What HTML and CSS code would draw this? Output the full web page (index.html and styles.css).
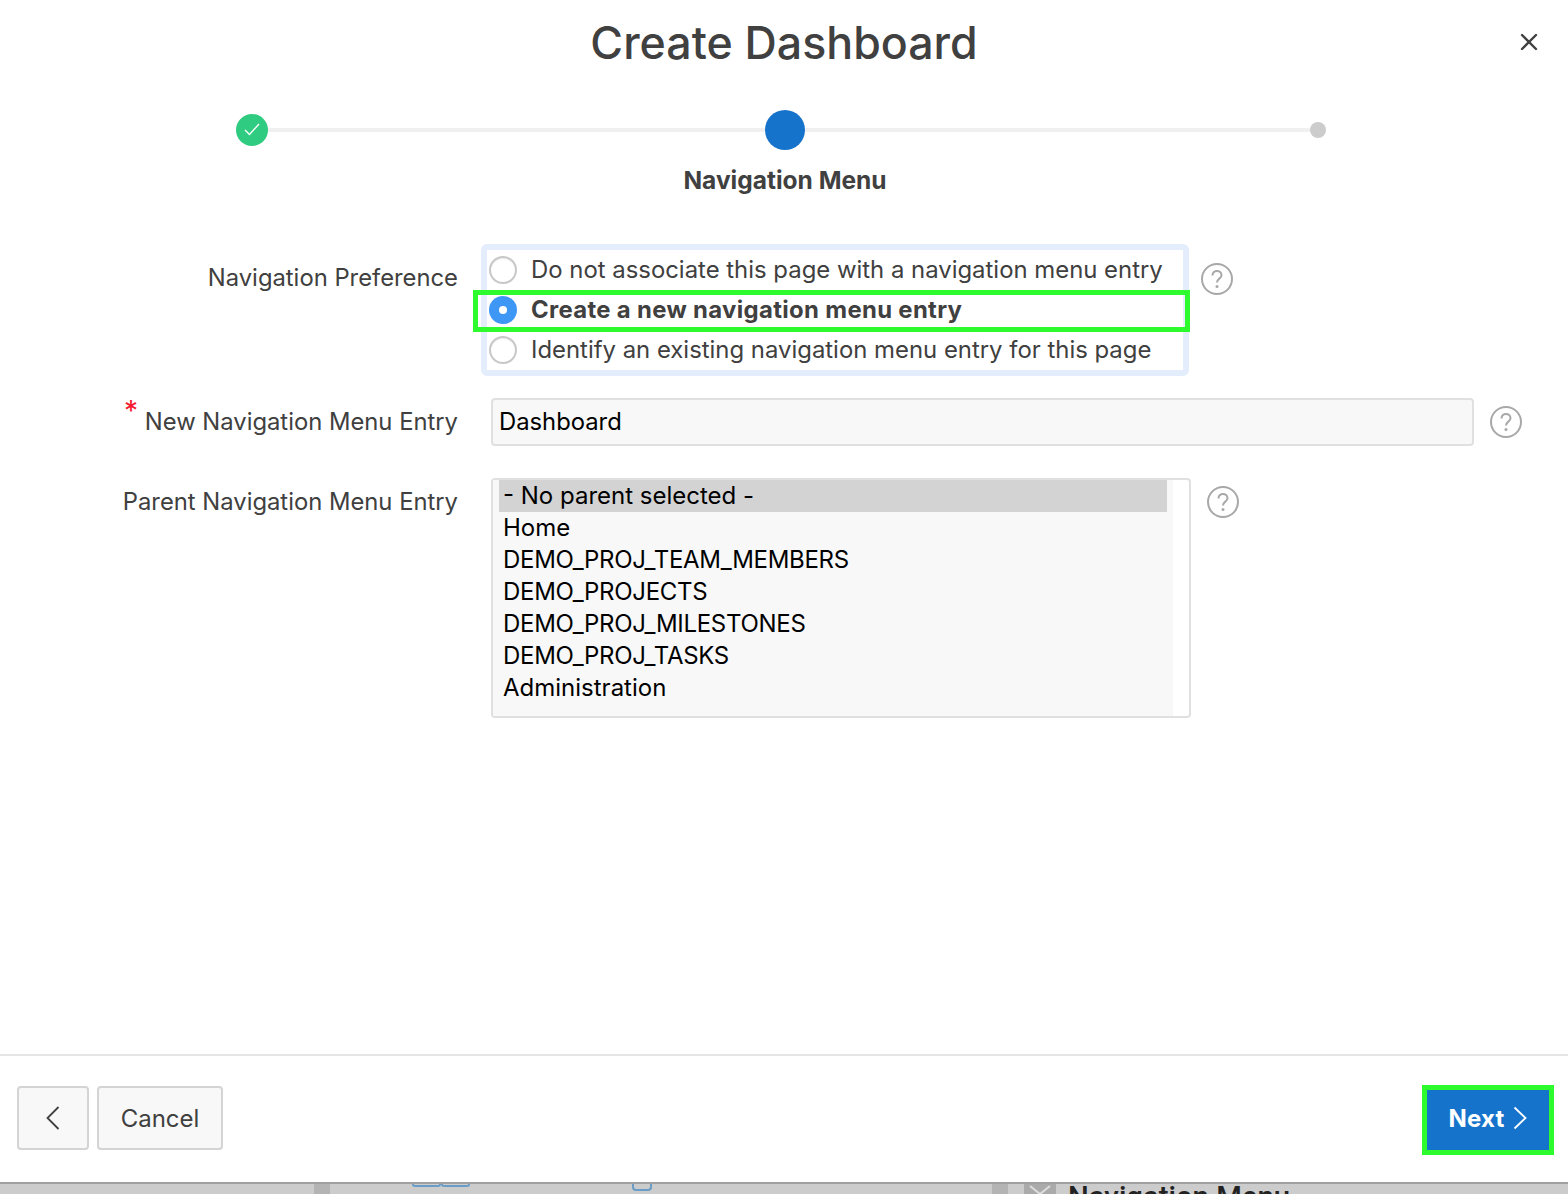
FILE: index.html
```html
<!DOCTYPE html>
<html lang="en">
<head>
    <meta charset="UTF-8">
    <title>Create Dashboard</title>
    <link rel="stylesheet" href="styles.css">
</head>
<body>

<div class="dialog">
    <div class="header">
        <h1>Create Dashboard</h1>
        <button class="close" aria-label="Close">
            <svg width="18" height="18" viewBox="0 0 18 18"><path d="M2 2 L16 16 M16 2 L2 16" stroke="#404040" stroke-width="2.4" stroke-linecap="round" fill="none"/></svg>
        </button>
    </div>

    <div class="steps">
        <span class="step done">
            <svg width="32" height="32" viewBox="0 0 32 32"><path d="M9 16 L13.5 20.5 L23 10" stroke="#fff" stroke-width="1.4" fill="none"/></svg>
        </span>
        <span class="line first"></span>
        <span class="step current"></span>
        <span class="line second"></span>
        <span class="step todo"></span>
    </div>
    <div class="step-name">Navigation Menu</div>

    <div class="form">
        <div class="row row-radio">
            <label class="row-label">Navigation Preference</label>
            <div class="radio-group">
                <div class="radio-item"><span class="radio"></span>Do not associate this page with a navigation menu entry</div>
                <div class="radio-item selected"><span class="radio"></span>Create a new navigation menu entry</div>
                <div class="radio-item"><span class="radio"></span>Identify an existing navigation menu entry for this page</div>
            </div>
            <svg class="help" viewBox="0 0 32 32"><circle cx="16" cy="16" r="15" fill="none" stroke="#a8a8a8" stroke-width="2"/><path d="M11.5 12.5 C11.5 6.5 20.5 6.5 20.5 12.2 C20.5 15.5 16 15.8 16 19.5" fill="none" stroke="#a8a8a8" stroke-width="2"/><circle cx="16" cy="23.5" r="1.5" fill="#a8a8a8"/></svg>
        </div>

        <div class="row row-input">
            <label class="row-label"><span class="required">*</span>New Navigation Menu Entry</label>
            <input class="text-field" type="text" value="Dashboard">
            <svg class="help" viewBox="0 0 32 32"><circle cx="16" cy="16" r="15" fill="none" stroke="#a8a8a8" stroke-width="2"/><path d="M11.5 12.5 C11.5 6.5 20.5 6.5 20.5 12.2 C20.5 15.5 16 15.8 16 19.5" fill="none" stroke="#a8a8a8" stroke-width="2"/><circle cx="16" cy="23.5" r="1.5" fill="#a8a8a8"/></svg>
        </div>

        <div class="row row-list">
            <label class="row-label">Parent Navigation Menu Entry</label>
            <div class="list-box">
                <ul>
                    <li class="picked">- No parent selected -</li>
                    <li>Home</li>
                    <li class="caps">DEMO_PROJ_TEAM_MEMBERS</li>
                    <li class="caps">DEMO_PROJECTS</li>
                    <li class="caps">DEMO_PROJ_MILESTONES</li>
                    <li class="caps">DEMO_PROJ_TASKS</li>
                    <li>Administration</li>
                </ul>
            </div>
            <svg class="help" viewBox="0 0 32 32"><circle cx="16" cy="16" r="15" fill="none" stroke="#a8a8a8" stroke-width="2"/><path d="M11.5 12.5 C11.5 6.5 20.5 6.5 20.5 12.2 C20.5 15.5 16 15.8 16 19.5" fill="none" stroke="#a8a8a8" stroke-width="2"/><circle cx="16" cy="23.5" r="1.5" fill="#a8a8a8"/></svg>
        </div>
    </div>

    <div class="footer">
        <button class="btn btn-back" aria-label="Back">
            <svg width="16" height="26" viewBox="0 0 16 26"><path d="M13.5 2 L2.5 13 L13.5 24" stroke="#404040" stroke-width="1.8" fill="none"/></svg>
        </button>
        <button class="btn btn-cancel">Cancel</button>
        <button class="btn-next">Next
            <svg width="16" height="24" viewBox="0 0 16 24"><path d="M2.5 1.5 L13.5 12 L2.5 22.5" stroke="#fff" stroke-width="1.8" fill="none"/></svg>
        </button>
    </div>
</div>

<div class="behind">
    <span class="b-bar"></span>
    <span class="b-tabs"><span></span><span></span></span>
    <span class="b-tab"></span>
    <span class="b-bar b-bar-right"></span>
    <span class="b-x">
        <svg width="32" height="11" viewBox="0 0 32 11"><path d="M6 2 L16 10 L26 2" stroke="#ddd" stroke-width="2" fill="none"/></svg>
    </span>
    <span class="b-title">Navigation Menu</span>
</div>

</body>
</html>
```

FILE: styles.css
```css
* {
    box-sizing: border-box;
}
body {
    margin: 0;
    height: 1194px;
    overflow: hidden;
    font-family: Inter, Roboto, "Liberation Sans", sans-serif;
    color: #404040;
    background: #ccc;
}
.dialog {
    height: 1182px;
    background: white;
    display: flex;
    flex-direction: column;
}

/* title */
.header {
    height: 108px;
    display: flex;
    justify-content: center;
    position: relative;
}
h1 {
    margin: 13px 0 0;
    font-size: 44.7px;
    line-height: 60px;
    font-weight: 500;
}
.close {
    position: absolute;
    right: 30px;
    top: 33px;
    width: 18px;
    height: 18px;
    padding: 0;
    border: none;
    background: none;
    display: flex;
}

/* wizard */
.steps {
    height: 44px;
    padding-left: 236px;
    display: flex;
    align-items: center;
}
.step {
    border-radius: 50%;
    flex: none;
    display: block;
}
.step.done { width: 32px; height: 32px; background: #2fcb80; }
.step.done svg { display: block; }
.step.current { width: 40px; height: 40px; background: #1673cc; }
.step.todo { width: 16px; height: 16px; background: #ccc; }
.line {
    height: 4px;
    background: #f0f0f0;
    flex: none;
}
.line.first { width: 497px; }
.line.second { width: 505px; }
.step-name {
    margin-top: 10px;
    padding-left: 2px;
    text-align: center;
    font-size: 24.5px;
    line-height: 36px;
    font-weight: 700;
}

/* form */
.form {
    flex: 1;
    padding-top: 46px;
}
.row {
    display: flex;
    align-items: flex-start;
}
.row-label {
    width: 458px;
    flex: none;
    text-align: right;
    font-size: 23.8px;
    line-height: 32px;
}
.help {
    width: 32px;
    height: 32px;
    flex: none;
}
.row-radio { height: 154px; }
.row-radio .row-label { padding-top: 18px; }
.row-radio .help { margin: 19px 0 0 12px; }
.radio-group {
    margin-left: 23px;
    width: 708px;
    height: 132px;
    border: 6px solid #e3edfc;
    border-radius: 6px;
    padding: 0 0 0 2px;
}
.radio-item {
    height: 40px;
    display: flex;
    align-items: center;
    gap: 14px;
    font-size: 23.9px;
    line-height: 38px;
    white-space: nowrap;
}
.radio {
    width: 28px;
    height: 28px;
    flex: none;
    border-radius: 50%;
    background: white;
    border: 2px solid #c8c8c8;
    box-shadow: inset 0 1px 1px rgba(0, 0, 0, 0.08);
}
.radio-item.selected {
    position: relative;
    font-weight: 700;
    letter-spacing: 0.33px;
}
.radio-item.selected .radio {
    background: #3f97f5;
    border: none;
    box-shadow: none;
    display: flex;
    align-items: center;
    justify-content: center;
}
.radio-item.selected .radio::after {
    content: "";
    width: 8px;
    height: 8px;
    border-radius: 50%;
    background: white;
}
.radio-item.selected::after {
    content: "";
    position: absolute;
    left: -16px;
    top: 0;
    width: 707px;
    height: 32px;
    border: 5px solid #2efb2e;
}

.row-input { height: 80px; }
.row-input .row-label { padding-top: 8px; position: relative; }
.required {
    position: absolute;
    left: 124px;
    top: -3px;
    color: #f5162f;
    font-size: 28px;
    line-height: 32px;
}
.text-field {
    margin-left: 33px;
    width: 983px;
    height: 48px;
    padding: 0 6px 2px;
    border: 2px solid #e0e0e0;
    border-radius: 4px;
    background: #f8f8f8;
    font-family: inherit;
    font-size: 23.8px;
    color: #000;
    outline: none;
}
.row-input .help { margin: 8px 0 0 16px; }

.row-list .row-label { padding-top: 8px; }
.list-box {
    margin-left: 33px;
    width: 700px;
    height: 240px;
    border: 2px solid #e0e0e0;
    border-radius: 4px;
    background: white;
}
.list-box ul {
    margin: 0;
    padding: 0 0 0 6px;
    list-style: none;
    width: 680px;
    height: 100%;
    background: #f8f8f8;
    color: #000;
    font-size: 24px;
    line-height: 32px;
}
.list-box li {
    width: 668px;
    padding-left: 4px;
    white-space: nowrap;
}
.list-box li.picked { background: #d3d3d3; }
.list-box li.caps { letter-spacing: -0.3px; }
.row-list .help { margin: 8px 0 0 16px; }

/* footer */
.footer {
    height: 128px;
    border-top: 2px solid #e5e5e5;
    padding: 30px 19px 0 17px;
    display: flex;
    align-items: flex-start;
    gap: 8px;
}
.btn {
    height: 64px;
    border: 2px solid #d4d4d4;
    border-radius: 4px;
    background: #f8f8f8;
    color: #404040;
    font-family: inherit;
    font-size: 24px;
    display: flex;
    align-items: center;
    justify-content: center;
    padding: 0;
}
.btn-back { width: 72px; }
.btn-cancel { width: 126px; }
.btn-next {
    margin: 4px 0 0 auto;
    width: 122px;
    height: 60px;
    border: none;
    background: #1673cc;
    color: white;
    font-family: inherit;
    font-size: 24px;
    font-weight: 700;
    letter-spacing: 0.2px;
    outline: 5px solid #2efb2e;
    display: flex;
    align-items: center;
    justify-content: center;
    gap: 8px;
    padding: 0 0 4px 1px;
}

/* page peeking out below the dialog */
.behind {
    height: 12px;
    border-top: 2px solid #a0a0a0;
    background: #ccc;
    overflow: hidden;
    display: flex;
    align-items: flex-start;
    padding-left: 314px;
}
.b-bar {
    width: 16px;
    height: 10px;
    flex: none;
    background: #b4b4b4;
}
.b-tabs {
    margin-left: 82px;
    width: 58px;
    height: 3px;
    flex: none;
    display: flex;
}
.b-tabs span {
    flex: 1;
    border: 2px solid #6a9cc8;
    border-top: none;
    border-radius: 0 0 4px 4px;
}
.b-tab {
    margin-left: 162px;
    width: 20px;
    height: 7px;
    flex: none;
    border: 2px solid #6a9cc8;
    border-top: none;
    border-radius: 0 0 4px 4px;
}
.b-bar-right { margin-left: 340px; }
.b-x {
    margin-left: 16px;
    width: 32px;
    height: 10px;
    flex: none;
    background: #aaa;
    display: block;
}
.b-x svg { display: block; }
.b-title {
    margin: -4px 0 0 12px;
    font-family: Roboto, sans-serif;
    font-size: 29.3px;
    line-height: 34px;
    font-weight: 500;
    color: #222;
    white-space: nowrap;
}
```
